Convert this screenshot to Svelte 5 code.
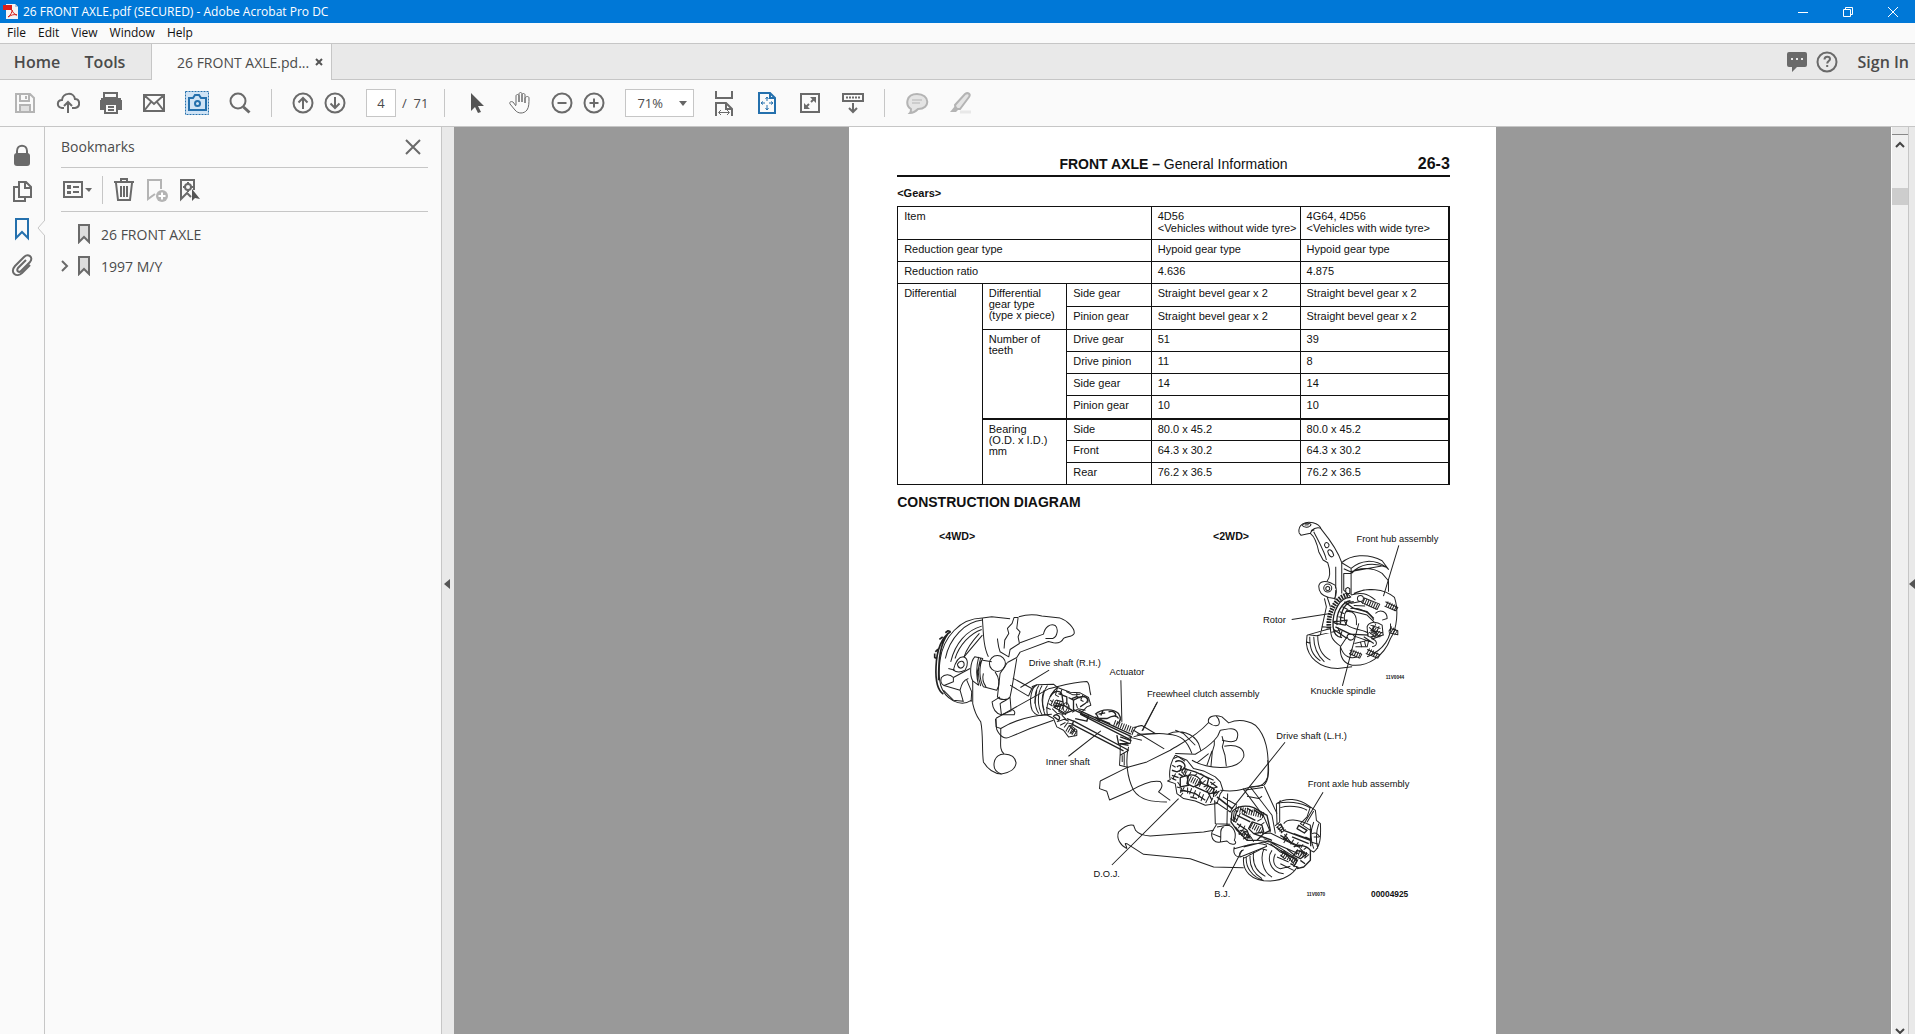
<script lang="ts">
  let pageNumber = $state('4')
  let zoom = $state('71%')

  type Bookmark = { title: string; nested: boolean }

  const bookmarks: Bookmark[] = [
    { title: '26 FRONT AXLE', nested: false },
    { title: '1997 M/Y', nested: true }
  ]

  const menus = ['File', 'Edit', 'View', 'Window', 'Help']
</script>

<div class="window">
  <header class="titlebar">
    <svg class="app-icon" width="16" height="16" viewBox="0 0 16 16" aria-hidden="true">
      <path d="M3 0h9l3 3v12H3z" fill="#f4f4f4" />
      <path d="M12 0l3 3h-3z" fill="#b9c6d6" />
      <path d="M0 1h9v5H0z" fill="#d9201a" />
      <path d="M5 13c3-2 4-5 4-7 1 3 2 4 5 5-3-1-6 0-9 2z" fill="none" stroke="#d9201a" />
    </svg>
    <span class="title">26 FRONT AXLE.pdf (SECURED) - Adobe Acrobat Pro DC</span>
    <div class="window-buttons">
      <button aria-label="Minimize"><svg width="12" height="12" viewBox="0 0 12 12"><path d="M1 6.5h10" /></svg></button>
      <button aria-label="Restore"><svg width="12" height="12" viewBox="0 0 12 12"><path d="M1.5 3.5h7v7h-7zM3.5 3.5v-2h7v7h-2" /></svg></button>
      <button aria-label="Close"><svg width="12" height="12" viewBox="0 0 12 12"><path d="M1 1l10 10M11 1L1 11" /></svg></button>
    </div>
  </header>

  <nav class="menubar" aria-label="Menu">
    {#each menus as menu}
      <button>{menu}</button>
    {/each}
  </nav>

  <div class="tabs">
    <button class="tab-home">Home</button>
    <button class="tab-tools">Tools</button>
    <div class="doc-tab">
      <span>26 FRONT AXLE.pd...</span>
      <button aria-label="Close tab">
        <svg width="8" height="8" viewBox="0 0 8 8"><path d="M1 1l6 6M7 1L1 7" stroke="#555" stroke-width="2" /></svg>
      </button>
    </div>
    <div class="account">
      <button aria-label="Comments">
        <svg width="22" height="22" viewBox="0 0 22 22"><path d="M3 1h16a2 2 0 012 2v11a2 2 0 01-2 2h-8l-5 5v-5H3a2 2 0 01-2-2V3a2 2 0 012-2z" fill="#6a6a6a" /><path d="M5 8h2m3 0h2m3 0h2" stroke="#e9e9e9" stroke-width="2" /></svg>
      </button>
      <button aria-label="Help">
        <svg class="ico" width="22" height="22" viewBox="0 0 22 22"><circle cx="11" cy="11" r="9.5" /><path d="M8.5 8.5c0-4 5.5-3.5 5.5-.5 0 2-2.8 2-2.8 4.500M11.2 14v2" /></svg>
      </button>
      <button class="sign-in">Sign In</button>
    </div>
  </div>

  <div class="toolbar">
    <button class="faded" aria-label="Save">
      <svg class="ico" width="24" height="24" viewBox="0 0 24 24"><path d="M3 3h14l4 4v14H3zM7 3v7h9V3M13 5v3M7 21v-7h10v7" /><path d="M8 15h8v5H8z" fill="#e0e0e0" stroke="none" /></svg>
    </button>
    <button aria-label="Upload">
      <svg class="ico" width="24" height="24" viewBox="0 0 24 24"><path d="M8 17H6c-6-1-5-8 0-8 1-8 12-8 13-1 5 0 6 8 0 9h-3M12 22V11M8 15l4-4 4 4" /></svg>
    </button>
    <button aria-label="Print">
      <svg class="ico" width="24" height="24" viewBox="0 0 24 24"><path d="M5 2h13v5H5z" /><path d="M1 9h22v10h-4v-5H5v5H1z" fill="#6a6a6a" stroke="none" /><path d="M6 13h12v9H6z" fill="#fafafa" /><path d="M9 16h6M9 19h6M2 8h20" /></svg>
    </button>
    <button aria-label="Mail">
      <svg class="ico" width="24" height="24" viewBox="0 0 24 24"><path d="M2 4h20v16H2zM2 4l10 9 10-9M2 20l7-9M22 20l-7-9" /></svg>
    </button>
    <button aria-label="Snapshot">
      <svg width="24" height="24" viewBox="0 0 24 24" fill="none" stroke="#2470ad" stroke-width="2"><path d="M.5.5h23v23H.5z" fill="#cfe3f5" stroke-width="1" stroke-dasharray="2 1" /><path d="M4 7h4l2-3h4l2 3h5v12H4z" /><circle cx="12.5" cy="12.5" r="2.5" /></svg>
    </button>
    <button aria-label="Find">
      <svg class="ico" width="24" height="24" viewBox="0 0 24 24"><circle cx="10" cy="10" r="7.5" /><path d="M15.5 16l6 5.5" stroke-width="3" /></svg>
    </button>
    <i class="sep"></i>
    <button class="near" aria-label="Previous page">
      <svg class="ico" width="24" height="24" viewBox="0 0 24 24"><circle cx="12" cy="12" r="9.5" /><path d="M12 18V7M7.5 11.5L12 7l4.5 4.5" /></svg>
    </button>
    <button class="near" aria-label="Next page">
      <svg class="ico" width="24" height="24" viewBox="0 0 24 24"><circle cx="12" cy="12" r="9.5" /><path d="M12 6v11M7.5 12.5L12 17l4.5-4.5" /></svg>
    </button>
    <input class="page-input" aria-label="Page" bind:value={pageNumber} />
    <span class="page-total">/&nbsp; 71</span>
    <i class="sep"></i>
    <button aria-label="Select">
      <svg width="24" height="24" viewBox="0 0 24 24"><path d="M6 2v18l4-4 3 6 3-1-3-6h6z" fill="#555" /></svg>
    </button>
    <button aria-label="Hand">
      <svg class="ico slim" width="24" height="24" viewBox="0 0 24 24"><path d="M8 14V5c0-2 3-2 3 0v6-8c0-2 3-2 3 0v8-7c0-2 3-2 3 0v8-5c1-2 4-2 4 0 0 5 0 9-2 12-3 4-9 4-12 0L2 13c-1-2 1-3 3-2l3 4" /></svg>
    </button>
    <button class="near zoom-out" aria-label="Zoom out">
      <svg class="ico" width="24" height="24" viewBox="0 0 24 24"><circle cx="12" cy="12" r="9.5" /><path d="M7.5 12h9" /></svg>
    </button>
    <button class="near" aria-label="Zoom in">
      <svg class="ico" width="24" height="24" viewBox="0 0 24 24"><circle cx="12" cy="12" r="9.5" /><path d="M7.5 12h9M12 7.5v9" /></svg>
    </button>
    <div class="zoom-box">
      <select aria-label="Zoom level" bind:value={zoom}>
        <option>71%</option>
        <option>100%</option>
      </select>
      <svg width="8" height="5" viewBox="0 0 8 5" aria-hidden="true"><path d="M0 0h8L4 5z" fill="#666" /></svg>
    </div>
    <button aria-label="Fit width">
      <svg class="ico" width="24" height="26" viewBox="0 0 24 26"><path d="M4 1v7h16V1M4 26V13h10l6 6v7M14 13v6h6" /><path d="M7 22.5h10M9 20l-2.5 2.5L9 25M15 20l2.5 2.5L15 25" stroke-width="1" /></svg>
    </button>
    <button aria-label="Fit page">
      <svg width="24" height="24" viewBox="0 0 24 24" fill="none" stroke="#2470ad" stroke-width="2"><path d="M4 2h11l5 5v15H4zM15 2v5h5" /><path d="M12 6v4M12 14v5M6 12h4M14 12h4M10.5 8L12 6l1.5 2M10.5 17l1.5 2 1.5-2M8 10.5L6 12l2 1.5M16 10.5l2 1.5-2 1.5" stroke-width="1" /></svg>
    </button>
    <button aria-label="Full screen">
      <svg class="ico" width="24" height="24" viewBox="0 0 24 24"><path d="M3 3h18v18H3zM7 17l4-4M13 11l4-4" /><path d="M12 6h6v6zM6 12v6h6z" fill="#6a6a6a" stroke="none" /></svg>
    </button>
    <button aria-label="Read mode">
      <svg class="ico" width="24" height="24" viewBox="0 0 24 24"><path d="M2 3h20v7H2zM12 12v9M8 17l4 4 4-4" /><path d="M5 6.5h14" stroke-dasharray="2 1" /></svg>
    </button>
    <i class="sep"></i>
    <button class="faded" aria-label="Add comment">
      <svg class="ico" width="24" height="24" viewBox="0 0 24 24"><path d="M6 18c-6-4-5-15 6-15 13 0 14 15 1 15-3 3-5 4-8 4 1-1 1-2 1-4z" fill="#e4e4e4" /><path d="M7 9h10M7 12h8" stroke-width="1" /></svg>
    </button>
    <button class="faded" aria-label="Highlight">
      <svg class="ico" width="24" height="24" viewBox="0 0 24 24"><path d="M12 21h11" stroke="#e8e8e8" stroke-width="3" /><path d="M7 14L17 3c3-2 6 0 4 3L12 18H8z" fill="#e4e4e4" /><path d="M7 15l4 3-3 3H2z" fill="#b4b4b4" stroke="none" /></svg>
    </button>
  </div>

  <div class="workspace">
    <nav class="rail" aria-label="Panels">
      <button aria-label="Security">
        <svg class="ico" width="24" height="24" viewBox="0 0 24 24"><path d="M7 12V8c0-7 10-7 10 0v4" /><rect x="4" y="10" width="16" height="13" rx="3" fill="#6a6a6a" stroke="none" /></svg>
      </button>
      <button aria-label="Page thumbnails">
        <svg class="ico" width="24" height="24" viewBox="0 0 24 24"><path d="M9 2h7l5 5v10H9zM15 2v6h6M9 7H4v14h11v-4" /></svg>
      </button>
      <button class="active" aria-label="Bookmarks">
        <svg width="24" height="24" viewBox="0 0 24 24"><path d="M6 2h12v19l-6-6-6 6z" fill="none" stroke="#2470ad" stroke-width="2" /></svg>
        <svg class="notch" width="8" height="16" viewBox="0 0 8 16" aria-hidden="true"><path d="M8 0L1 8l7 8" fill="#fafafa" stroke="#c6c6c6" /></svg>
      </button>
      <button aria-label="Attachments">
        <svg class="ico" width="24" height="24" viewBox="0 0 24 24"><path d="M16 6l-8 8c-2 3 1 5 3 3l9-9c4-5-2-9-6-5l-9 9c-6 7 2 12 7 7l8-8" /></svg>
      </button>
    </nav>

    <aside class="panel">
      <div class="panel-head">
        <h2>Bookmarks</h2>
        <button aria-label="Close panel">
          <svg class="ico" width="16" height="16" viewBox="0 0 16 16"><path d="M1 1l14 14M15 1L1 15" /></svg>
        </button>
      </div>
      <div class="panel-tools">
        <button aria-label="Options">
          <svg class="ico" width="32" height="24" viewBox="0 0 32 24"><path d="M3 4h18v15H3zM12 9h6M12 14h6" /><path d="M6 7h4v4H6zM6 13h4v3H6zM24 10h7l-3 4z" fill="#6a6a6a" stroke="none" /></svg>
        </button>
        <i></i>
        <button aria-label="Delete">
          <svg class="ico" width="24" height="24" viewBox="0 0 24 24"><path d="M2 4h20M9 4V1h6v3M4 5l2 17h12l2-17M9 8v11M12 8v11M15 8v11" /></svg>
        </button>
        <button class="faded" aria-label="New bookmark">
          <svg class="ico" width="24" height="24" viewBox="0 0 24 24"><path d="M10 16l-7 5V2h13v9" /><circle cx="17" cy="18" r="6" fill="#b4b4b4" stroke="none" /><path d="M13.5 18h7M17 14.5v7" stroke="#fff" /></svg>
        </button>
        <button aria-label="Find bookmark">
          <svg class="ico" width="24" height="24" viewBox="0 0 24 24"><path d="M16 12V2H3v19l6-6 4 4" /><circle cx="10" cy="9" r="3" /><path d="M10 4v2M10 12v2M5 9h2M13 9h2" /><path d="M14 11v12l3-3 5 1z" fill="#555" stroke="none" /></svg>
        </button>
      </div>
      <ul>
        {#each bookmarks as bookmark}
          <li>
            <span class="twisty">
              {#if bookmark.nested}
                <svg class="ico" width="8" height="12" viewBox="0 0 8 12"><path d="M1 1l5 5-5 5" /></svg>
              {/if}
            </span>
            <svg class="ico" width="14" height="20" viewBox="0 0 14 20" aria-hidden="true"><path d="M2 1h10v17l-5-5-5 5z" fill="#ddd" /></svg>
            <a href="#page">{bookmark.title}</a>
          </li>
        {/each}
      </ul>
    </aside>

    <button class="splitter" aria-label="Collapse panel">
      <svg width="6" height="10" viewBox="0 0 6 10"><path d="M6 0v10L0 5z" fill="#555" /></svg>
    </button>

    <main class="viewer">
      <article class="page" id="page">
        <div class="page-head">
          <span class="running"><b>FRONT AXLE –</b> General Information</span>
          <b class="folio">26-3</b>
        </div>
        <h3>&lt;Gears&gt;</h3>
        <table>
          <colgroup>
            <col /><col /><col /><col class="model" /><col class="model" />
          </colgroup>
          <tbody>
            <tr class="first"><td colspan="3">Item</td><td>4D56<br />&lt;Vehicles without wide tyre&gt;</td><td>4G64, 4D56<br />&lt;Vehicles with wide tyre&gt;</td></tr>
            <tr><td colspan="3">Reduction gear type</td><td>Hypoid gear type</td><td>Hypoid gear type</td></tr>
            <tr><td colspan="3">Reduction ratio</td><td>4.636</td><td>4.875</td></tr>
            <tr class="tall"><td rowspan="9">Differential</td><td rowspan="2">Differential<br />gear type<br />(type x piece)</td><td>Side gear</td><td>Straight bevel gear x 2</td><td>Straight bevel gear x 2</td></tr>
            <tr class="tall"><td>Pinion gear</td><td>Straight bevel gear x 2</td><td>Straight bevel gear x 2</td></tr>
            <tr><td rowspan="4">Number of<br />teeth</td><td>Drive gear</td><td>51</td><td>39</td></tr>
            <tr><td>Drive pinion</td><td>11</td><td>8</td></tr>
            <tr><td>Side gear</td><td>14</td><td>14</td></tr>
            <tr class="tall"><td>Pinion gear</td><td>10</td><td>10</td></tr>
            <tr class="heavy"><td rowspan="3">Bearing<br />(O.D. x I.D.)<br />mm</td><td>Side</td><td>80.0 x 45.2</td><td>80.0 x 45.2</td></tr>
            <tr><td>Front</td><td>64.3 x 30.2</td><td>64.3 x 30.2</td></tr>
            <tr><td>Rear</td><td>76.2 x 36.5</td><td>76.2 x 36.5</td></tr>
          </tbody>
        </table>
        <h2>CONSTRUCTION DIAGRAM</h2>

        <svg class="diagram" viewBox="0 0 1590 1200" role="img" aria-label="Front axle construction">
          <text class="drive" x="57" y="90">&lt;4WD&gt;</text>
          <text class="drive" x="878" y="90">&lt;2WD&gt;</text>

          <!-- right-hand wheel, strut and inner shaft -->
          <g transform="translate(0 240)">
            <path d="M187 84C120 85 70 140 60 210C52 270 60 310 100 332C120 342 140 340 155 330" />
            <path d="M187 90C135 95 88 145 76 205M185 108C140 120 105 160 92 215M185 118C150 130 118 165 105 205M178 130C155 155 140 175 132 200" />
            <path d="M92 124C68 140 50 175 48 230C46 270 52 300 70 312M84 130C62 160 55 200 56 270M76 128l8-6 8 3M58 148l10-8M46 185l8-8M44 190v12l8 4" stroke-width="5" />
            <path d="M64 262C75 250 90 252 100 262L100 275L72 286C64 282 60 274 64 262ZM100 240C106 215 115 200 130 200C145 205 145 225 135 240C120 248 108 246 100 240ZM112 222C120 208 134 212 132 226C126 238 114 236 112 222" />
            <path d="M72 286L120 300C125 280 130 270 145 265M120 300L130 335M100 262L150 235M70 300l30 30 30 3M140 270L155 305L153 335M85 235L105 240M132 200l55-65" />
            <path d="M187 84C190 130 190 170 205 200M187 84L215 80L270 86M296 80C330 70 350 74 365 78L420 84C440 90 465 115 462 130C455 142 440 138 430 145C425 155 415 160 400 158L385 154L300 186L290 202L262 217" />
            <path d="M282 82L294 82L290 115L300 125L294 140L298 160L270 178L266 200L240 185C234 170 234 160 232 145M282 82L276 100L262 115L266 130L254 150L252 175M300 158L370 132C375 110 390 100 405 106C416 115 412 140 398 145L376 145" />
            <circle cx="232" cy="220" r="24" />
            <path d="M164 200C150 215 148 255 158 272L175 285C170 262 170 230 188 205ZM188 205C175 230 178 270 190 290L230 300C240 285 238 262 225 245M188 210L215 215M176 200C168 230 168 260 176 286M182 203C173 230 173 262 182 288M190 250C186 265 190 280 198 290" />
            <path d="M158 272V340C166 375 172 380 182 395C190 430 185 480 190 515C205 540 222 550 244 551C270 548 286 535 288 518C286 500 275 492 252 491C238 480 242 460 242 440V415L228 410V384" />
            <path d="M244 551C225 545 218 530 224 510C228 498 236 492 252 491M262 217L240 250L232 320C240 330 262 332 270 320L276 290L290 205M240 320L216 335C218 355 225 370 244 374H282C286 368 284 360 275 358M270 322L273 362L244 374L240 340C250 332 262 330 270 322" />
            <path d="M228 384L385 296C430 285 460 275 500 274C510 280 505 290 512 315M226 386L230 418C240 440 255 448 270 440L330 415L400 390M242 415C290 385 340 375 395 372" />
            <path d="M278 264L335 295M270 285L325 318M325 318L335 295L350 284M301 292L387 240" />
            <path d="M350 284C335 290 325 330 336 360C345 375 360 378 372 374M335 290L350 284L400 282L412 292C390 310 375 345 382 375L372 374M356 286C340 310 342 350 356 370M366 286C350 310 352 350 366 374M382 286C364 310 364 350 376 376M412 292L450 306L480 308L505 322L512 345L500 350L480 370M382 375L400 385L410 410L430 420L445 440L470 436V420L450 405" />
            <path d="M390 320C400 300 420 300 425 312L430 345L400 350M400 350L435 370L460 360V330L445 322M460 330L480 320C500 315 510 330 495 340L480 350M415 310L440 320V345M400 378C410 368 425 380 415 390ZM430 345l25 15M440 385l20 8-5 14M408 330l20 5M404 338l22 6M402 345l18 4M446 405l20 20M455 325l15-6 12 4" stroke-width="4" />
            <path d="M412 292l-6 22 10 6M425 298l-4 14M438 304l20 10 22-2M470 308v10M488 314l-6 16 8 4M498 322c6 2 8 10 4 16M420 352l-4 12 22 10M396 355l14 14 20 4M385 340l12 8M378 352l14 6M390 330l8 6M446 345l-10 20M456 366l18-10 22 4M468 340l4 14M410 395l22-8 14 6M420 405l16-8M432 412l10-14 18 4M425 375l14 14M452 430l12-14M350 300l-6 40M372 300c-8 20-8 40 0 60" />
            <ellipse cx="438" cy="352" rx="9" ry="14" />
            <path class="thread" d="M395 335L432 352M440 415L470 432" />
            <path d="M460 358L635 440M480 372L630 448M475 360L632 432" stroke-width="4" />
            <path d="M460 392L625 480M455 402L610 482M465 385L500 393L505 375M590 435L595 460L625 465M600 440l34 12M598 448l30 12" stroke-width="4" />
            <path d="M525 372C545 355 580 355 595 370C605 385 600 395 590 402M528 370L535 385L560 385C580 375 590 375 595 385M540 388L570 400M565 365C580 360 590 370 585 380M535 372l20-4M548 362l-6 14M525 380l14 12" stroke-width="4" />
            <path class="thread" d="M582 398L640 420" />
            <path d="M635 435C640 415 650 405 665 406L705 430M640 412L665 406M650 432L720 430M632 440L630 460L600 460V490L598 525L625 532M600 495L625 480M625 440L665 450M606 495v20M612 490v36" />
            <path d="M602 270L605 395M712 335L667 422M445 498L542 422" />
          </g>

          <!-- differential housing and left-hand side -->
          <g transform="translate(480 540)">
            <path d="M145 170C135 210 140 260 160 300C180 330 215 335 260 335M160 140C190 130 240 128 262 132C300 115 340 130 355 160L362 182M262 132C305 135 320 150 335 190M285 120L310 130L345 165" />
            <path d="M60 272L140 232L200 215L270 180C300 160 345 142 385 97C380 80 400 72 425 80L445 98C470 88 500 90 525 105C555 135 568 180 562 260C555 285 535 292 510 290" />
            <path d="M160 120L252 176M60 272L58 295L80 303L88 329L150 302C170 290 210 268 240 274C252 285 240 300 235 305L270 330M385 97C395 105 405 110 415 104C420 95 418 88 408 78" />
            <path d="M420 120L445 116C470 112 478 130 468 150C455 160 440 152 425 150M420 120L412 138L402 150V165L396 185L392 228M425 138L430 155L426 170L434 195L438 228M402 150C388 165 370 178 345 192L285 190M432 168C470 160 495 175 490 200C480 225 450 232 420 232C380 230 355 222 335 210M385 190L350 218M395 182L380 225" />
            <path d="M420 300C460 305 480 300 510 290L550 285C568 270 566 230 562 210" />
            <path d="M285 195C270 215 265 250 270 268L262 272L285 280L290 310L310 325L345 332L375 345L410 340L420 310L428 300L420 275L405 260L370 242L340 235L320 210L285 195" />
            <path d="M285 215C300 205 320 220 312 235L290 245L275 240M290 230C298 222 308 228 300 236M312 235L345 245L400 270M325 255C345 250 365 265 360 280L340 290L320 280ZM300 262L320 255L325 285L300 290ZM345 290L390 310L410 305M355 275L400 295V320M310 300L345 310L375 330M390 275L410 290M330 320L350 325M380 300L395 330M295 250L310 260M275 255L295 262M300 300L330 305M360 250L385 265L380 285" stroke-width="4" />
            <path d="M280 205l14-6 20 14M276 225l10 6M286 250l-8 16 10 4M305 245l10 14M318 240l-4 16M332 245l-6 12M350 250l-8 8M292 275l10 14M290 290l14 4-4 14M312 290l-8 16M322 292v18M334 294l-6 18M346 300l-8 20M360 305l-6 18M370 312l-8 20M386 318l-10 20M398 322l-8 16M405 275l-12 8M412 290l-14 4M418 302l-20 10M370 258l-10 10M376 270l-12 10M384 284l-14 6M272 262l16 8M300 318l8-10" />
            <path class="thread" d="M328 265L362 282M300 235L320 245M380 290L412 312" />
            <path d="M428 320L470 345M405 335L450 365L458 350M403 330L405 400L450 402M442 310L440 400M410 400L395 425C390 445 405 460 420 455L440 452C455 470 475 460 462 450C470 430 460 405 440 405L410 410M420 455C425 435 415 415 430 410M395 430L420 440" />
            <path d="M410 320L455 355" stroke-width="5" />
            <path d="M140 475C120 465 108 445 115 425C130 410 145 400 160 405L166 420C175 432 190 436 210 437L370 425L400 420M140 475C138 462 130 458 140 460L190 492L330 505L400 530L490 532" />
            <path d="M488 295L550 378L570 425M510 290L575 375L585 430M552 288L590 370M490 300L548 292M500 318L535 325L545 318" />
            <path d="M455 365C470 345 500 345 520 352L560 375L570 420L550 430M455 365L452 395L470 420L500 450L530 450L550 430M470 360L460 395M470 375L510 395M485 370L525 390M515 395L545 405L550 425L520 430L505 415ZM470 400L500 420L510 445M465 410L490 440M480 355l18 12M500 353l18 12M520 358l18 12M535 368l16 10M520 430L575 450M490 425l16 16" stroke-width="4" />
            <path d="M462 362l-4 30M480 368l-14 28M458 380l14 10M450 385l18 12M482 400l-8 14M494 406l-8 16M478 420l22 4M474 430l20 2M488 446l24-8M512 440l8 14M545 385l-14 8M552 396l-10 8" />
            <path class="thread" d="M512 405L545 422M480 425L508 442M465 355L550 375" />
            <path d="M545 430L570 428L655 470L670 485M530 450L570 455L640 498M550 445L655 490M570 460L600 485L650 505" />
            <path d="M490 470L550 455C600 475 620 490 640 520M462 470C458 485 462 500 480 500L560 468M462 475L500 465C530 455 545 460 560 465M480 500C475 490 480 482 490 478" />
            <path d="M490 500C485 540 510 572 570 572C610 570 640 550 650 530M498 500C495 530 515 560 550 570M510 490C505 525 520 550 545 565M520 485C515 520 530 545 555 558M488 505L545 475L560 480M575 480C560 500 565 545 610 550M550 478C540 500 545 545 575 560M585 490C575 510 580 530 600 535L630 528M600 520L640 540M590 500L625 515" />
            <path d="M588 340C615 322 655 322 690 350L705 360L708 390L720 400C722 440 720 470 700 485L690 480M588 340L590 400L605 405M598 342V395M588 340C620 332 660 335 688 352M600 352C625 345 660 348 680 360M610 400C620 385 650 385 690 405V460M690 350L680 380L660 400L690 420M700 395C690 420 690 450 700 475M715 400C705 430 706 450 712 475M695 430C705 425 712 430 718 440" />
            <path d="M655 405L680 420L672 428L650 415ZM640 430L690 448M635 440L685 460M600 400L610 420L690 450M640 470C650 460 680 465 690 480V510L670 530L650 535M650 480L640 495L660 505L680 490ZM600 480L650 510L640 530M620 430L610 445L660 470M590 410l15 15M600 435l20 12M675 440l16 8v20M660 510l14 10M630 520l24 12" stroke-width="4" />
            <path d="M612 432l24 30M622 440l-12 18M640 448l-10 14M654 456l-8 12M668 462l-6 10M680 470l-10 8M610 480l20 20M620 476l22 18M600 494l14 12M660 478l16 16M668 488l-14 14M686 492l-14 12M640 514l10-10M700 362l-20 34M600 330l-4 12M700 440h16M694 456l20 6" />
            <path class="thread" d="M648 485L680 495M605 490L650 515M590 400L610 425" />
            <path d="M230 38L185 122M614 156L455 355M728 306L668 405M95 524L295 325M428 590L485 480" />
          </g>

          <!-- hub, rotor and knuckle -->
          <g transform="translate(990 0)">
            <path d="M146 68C142 42 165 33 188 38C205 42 210 50 213 58C235 85 262 120 274 158V250M146 68L152 76L180 70C190 78 200 100 205 125L218 150L232 158C242 185 238 205 230 213M182 62C198 50 210 52 213 58M180 70C182 64 186 60 192 60M190 65C205 95 225 130 228 150M256 170V235" />
            <path d="M155 46C160 38 180 38 182 44C178 54 160 54 155 46ZM163 45l12-1M222 105C224 95 232 95 236 104C236 114 226 118 222 105ZM232 125C234 115 246 118 250 136C245 145 235 140 232 125Z" />
            <path d="M205 228C208 212 225 212 240 218L254 225C260 240 258 255 252 265L235 262C215 258 205 245 205 228M222 265L228 290L215 350M256 240L254 270M230 260L240 290" />
            <circle cx="232" cy="234" r="12" /><circle cx="232" cy="235" r="6" />
            <path d="M274 158C300 135 350 128 395 152L414 178L408 172C370 155 330 160 302 190L280 190V240L302 262M274 158L302 175V255M302 190C325 168 370 172 395 190L414 212V245M302 175C330 150 370 145 408 172M288 180l20 8M280 176l22 10M302 184l100-18M286 236l6-4 6 4v14h-12z" />
            <path d="M170 375L168 400C172 440 205 475 262 475L305 470M170 375C180 370 195 382 210 374L215 350L240 352M170 375L240 355M178 380C178 415 185 435 210 452M190 380C190 410 200 435 222 455M202 378C202 412 215 438 240 450M205 375L270 360M168 395L180 400M240 350C240 380 245 390 270 408" />
            <path d="M310 250C350 232 400 235 432 262C445 300 440 355 420 385C400 440 350 470 305 465C280 460 268 440 270 410L290 380M302 255C330 245 350 250 375 270M310 250L340 240L365 238M420 340C425 380 400 420 350 440M270 410C280 440 300 448 320 440" />
            <path class="teeth" d="M292 254C255 262 230 310 236 358" />
            <path d="M300 262C270 262 245 300 248 350C250 370 260 382 275 382M300 272C275 275 255 310 260 345M310 275C285 275 270 300 270 340M282 275L310 295L350 305L370 325M250 335L290 330L285 345L255 340ZM255 350L300 372L355 375M250 358L290 385" stroke-width="4" />
            <path d="M290 300C280 310 278 335 290 345C310 360 340 358 355 370M290 300L350 315L375 340M300 295C330 290 360 310 370 330M285 305C310 300 320 315 318 345M350 350C355 335 375 332 395 345L398 375L370 385L352 378ZM360 345l30 10M362 360l34 8M368 345v35M360 380l40-5M375 310C390 295 410 305 410 325L395 330M290 380C290 370 305 368 312 378C312 392 295 395 290 380ZM312 378L360 395M312 400L355 390L350 410L315 410M362 385C380 390 385 405 365 410M340 380L370 400" />
            <path d="M276 290l16 8M268 305l14 6M264 320l16 4M300 280l30-6M310 286l34 2M262 352l10 24M275 362l-6 20M356 352l30 26M376 342l-16 30M386 348l-14 34M356 366l20 16M330 395l4 16M342 393l4 16" />
            <circle cx="330" cy="265" r="9" />
            <path class="thread" d="M338 272L380 290M408 282L438 296M352 422L382 438M300 424L332 438M418 356L438 368M365 355L392 378" />
            <path d="M340 263L388 282L380 298L332 276M405 275L442 292L436 302L402 288M298 420L334 432L328 444L296 430M350 418L388 434L382 444L346 430M420 355L442 362V374L415 368" />
            <path d="M445 106L399 258M124 328L240 310M276 527L325 340" />
          </g>

          <g class="labels">
            <text x="326" y="467">Drive shaft (R.H.)</text>
            <text x="568" y="494">Actuator</text>
            <text x="680" y="560">Freewheel clutch assembly</text>
            <text x="377" y="764">Inner shaft</text>
            <text x="1068" y="686">Drive shaft (L.H.)</text>
            <text x="1162" y="830">Front axle hub assembly</text>
            <text x="520" y="1100">D.O.J.</text>
            <text x="882" y="1160">B.J.</text>
            <text x="1308" y="96">Front hub assembly</text>
            <text x="1028" y="338">Rotor</text>
            <text x="1170" y="550">Knuckle spindle</text>
          </g>
          <text class="code" x="1396" y="508">11V0044</text>
          <text class="code" x="1159" y="1157">11V0070</text>
          <text class="plate" x="1352" y="1159">00004925</text>
        </svg>
      </article>
    </main>

    <div class="scrollbar">
      <div class="split"></div>
      <button aria-label="Scroll up"><svg width="10" height="7" viewBox="0 0 10 7"><path d="M1 6l4-4 4 4" /></svg></button>
      <div class="track"><div class="thumb"></div></div>
      <button class="down" aria-label="Scroll down"><svg width="10" height="7" viewBox="0 0 10 7"><path d="M1 1l4 4 4-4" /></svg></button>
    </div>
    <button class="edge" aria-label="Show tools">
      <svg width="6" height="10" viewBox="0 0 6 10"><path d="M6 0v10L0 5z" fill="#555" /></svg>
    </button>
  </div>
</div>

<style>
  :global(body) {
    overflow: hidden;
  }

  .window {
    height: 100vh;
    display: flex;
    flex-direction: column;
    background: #fafafa;
    color: #4b4b4b;
    font-family: "Segoe UI", "Open Sans", "Noto Sans", sans-serif;
    font-size: 14px;
  }

  button {
    display: flex;
    align-items: center;
    justify-content: center;
    padding: 0;
    border: 0;
    background: none;
    color: inherit;
    font: inherit;
  }

  svg {
    display: block;
    flex: none;
  }

  .ico {
    fill: none;
    stroke: #6a6a6a;
    stroke-width: 2;
  }

  .faded .ico {
    stroke: #b4b4b4;
  }

  .titlebar {
    display: flex;
    align-items: center;
    height: 23px;
    padding-left: 3px;
    background: #0078d7;
    color: #fff;
    font-size: 12px;
  }

  .title {
    flex: 1;
    margin-left: 4px;
  }

  .window-buttons {
    display: flex;
  }

  .window-buttons button {
    width: 45px;
    height: 20px;
  }

  .window-buttons svg {
    fill: none;
    stroke: #fff;
  }

  .menubar {
    display: flex;
    gap: 12px;
    height: 20px;
    padding-left: 7px;
    color: #111;
    font-size: 12px;
  }

  .menubar button {
    height: 19px;
  }

  .tabs {
    display: flex;
    height: 35px;
    border-top: 1px solid #c6c6c6;
    border-bottom: 1px solid #c6c6c6;
    background: #e9e9e9;
    font-size: 16px;
  }

  .tab-home,
  .tab-tools,
  .sign-in {
    font-weight: 600;
  }

  .tab-home {
    width: 74px;
  }

  .tab-tools {
    width: 62px;
    margin-right: 15px;
  }

  .doc-tab {
    display: flex;
    align-items: center;
    gap: 6px;
    height: 36px;
    padding: 0 8px 0 25px;
    border-left: 1px solid #c6c6c6;
    border-right: 1px solid #c6c6c6;
    background: #fafafa;
    font-size: 14px;
  }

  .account {
    display: flex;
    align-items: center;
    gap: 8px;
    margin-left: auto;
    padding-right: 6px;
  }

  .sign-in {
    margin-left: 12px;
  }

  .toolbar {
    display: flex;
    align-items: center;
    height: 46px;
    padding-left: 3px;
    border-bottom: 1px solid #c6c6c6;
  }

  .toolbar button {
    width: 43px;
    height: 32px;
  }

  .toolbar .near {
    width: 32px;
  }

  .toolbar .zoom-out {
    margin-left: 5px;
  }

  .slim {
    stroke-width: 1;
  }

  .sep {
    width: 1px;
    height: 28px;
    margin: 0 10px;
    background: #c6c6c6;
  }

  .sep + .near {
    margin-left: 5px;
  }

  .page-input {
    box-sizing: border-box;
    width: 30px;
    height: 28px;
    margin: 0 6px 0 15px;
    padding: 0;
    border: 1px solid #c6c6c6;
    background: #fff;
    color: inherit;
    font: inherit;
    font-size: 13px;
    text-align: center;
  }

  .page-total {
    margin-right: 6px;
    font-size: 13px;
  }

  .zoom-box {
    position: relative;
    width: 69px;
    height: 28px;
    margin: 0 8px 0 15px;
  }

  .zoom-box select {
    box-sizing: border-box;
    width: 100%;
    height: 100%;
    padding: 0 11px;
    border: 1px solid #c6c6c6;
    border-radius: 0;
    background: #fff;
    appearance: none;
    color: inherit;
    font: inherit;
    font-size: 13px;
  }

  .zoom-box svg {
    position: absolute;
    top: 12px;
    right: 7px;
    pointer-events: none;
  }

  .workspace {
    flex: 1;
    display: flex;
    min-height: 0;
  }

  .rail {
    box-sizing: border-box;
    width: 45px;
    padding-top: 9px;
    border-right: 1px solid #c6c6c6;
  }

  .rail button {
    position: relative;
    width: 100%;
    height: 37px;
  }

  .notch {
    position: absolute;
    right: -1px;
    top: 10px;
  }

  .panel {
    box-sizing: border-box;
    width: 396px;
    padding: 0 13px 0 16px;
  }

  .panel-head {
    display: flex;
    align-items: center;
    justify-content: space-between;
    height: 40px;
    padding-right: 7px;
    border-bottom: 1px solid #c6c6c6;
  }

  .panel-head h2 {
    margin: 0;
    font-size: 14px;
    font-weight: 400;
    line-height: 20px;
  }

  .panel-tools {
    display: flex;
    align-items: center;
    gap: 9px;
    height: 43px;
    border-bottom: 1px solid #c6c6c6;
  }

  .panel-tools i {
    width: 1px;
    height: 28px;
    background: #c6c6c6;
  }

  ul {
    margin: 0;
    padding: 6px 0 0;
    list-style: none;
  }

  li {
    display: flex;
    align-items: center;
    height: 32px;
  }

  .twisty {
    width: 16px;
  }

  li a {
    margin-left: 10px;
    color: inherit;
    text-decoration: none;
  }

  .splitter {
    box-sizing: border-box;
    width: 13px;
    padding: 6px 2px 0 0;
    border-left: 1px solid #c6c6c6;
    background: #e9e9e9;
  }

  .viewer {
    flex: 1;
    display: flex;
    justify-content: center;
    overflow: hidden;
    background: #999;
  }

  .page {
    box-sizing: border-box;
    width: 45%;
    padding: 26px 46px 0 48px;
    background: #fff;
    color: #111;
    font-family: "Liberation Sans", Arial, sans-serif;
  }

  .page-head {
    display: grid;
    grid-template-columns: 1fr auto 1fr;
    align-items: center;
    height: 22px;
    border-bottom: 2px solid #111;
    font-size: 14px;
  }

  .running {
    grid-column: 2;
  }

  .folio {
    justify-self: end;
    font-size: 16px;
  }

  .page h3 {
    margin: 10px 0 6px;
    font-size: 11px;
    line-height: 13px;
  }

  table {
    width: 100%;
    table-layout: fixed;
    border: 1px solid #111;
    border-right-width: 2px;
    border-collapse: collapse;
    font-size: 11px;
    line-height: 11px;
  }

  .model {
    width: 27%;
  }

  tr {
    height: 22px;
  }

  tr.first {
    height: 33px;
    line-height: 12px;
  }

  tr.tall {
    height: 23px;
  }

  td {
    padding: 4px 0 0 6px;
    border: 1px solid #111;
    vertical-align: top;
    white-space: nowrap;
  }

  tr.first td {
    padding-top: 3px;
  }

  tr.heavy td {
    border-top-width: 2px;
  }

  .page h2 {
    margin: 9px 0 0;
    font-size: 14px;
    line-height: 16px;
  }

  .diagram {
    width: 96%;
    margin-left: 23px;
    fill: none;
    stroke: #222;
    stroke-width: 3;
    stroke-linejoin: round;
  }

  .diagram text {
    fill: #111;
    stroke: none;
    font-size: 28px;
  }

  .diagram .drive {
    font-size: 32px;
    font-weight: 700;
  }

  .diagram .code {
    font-size: 14px;
    font-weight: 700;
  }

  .diagram .plate {
    font-size: 25px;
    font-weight: 700;
  }

  .thread {
    stroke-width: 18;
    stroke-dasharray: 3 4;
  }

  .teeth {
    stroke-width: 14;
    stroke-dasharray: 5 3;
  }

  .scrollbar {
    box-sizing: border-box;
    display: flex;
    flex-direction: column;
    width: 18px;
    border-left: 1px solid #fff;
    border-right: 1px solid #c6c6c6;
    background: #f0f0f0;
  }

  .scrollbar svg {
    fill: none;
    stroke: #444;
    stroke-width: 2;
  }

  .scrollbar button {
    height: 18px;
  }

  .scrollbar .down {
    height: 6px;
  }

  .scrollbar .split {
    height: 7px;
    border-bottom: 1px solid #888;
    background: #e9e9e9;
  }

  .track {
    flex: 1;
    padding-top: 35px;
  }

  .thumb {
    height: 17px;
    background: #cdcdcd;
  }

  .edge {
    width: 6px;
    padding-top: 6px;
    background: #e9e9e9;
  }
</style>
